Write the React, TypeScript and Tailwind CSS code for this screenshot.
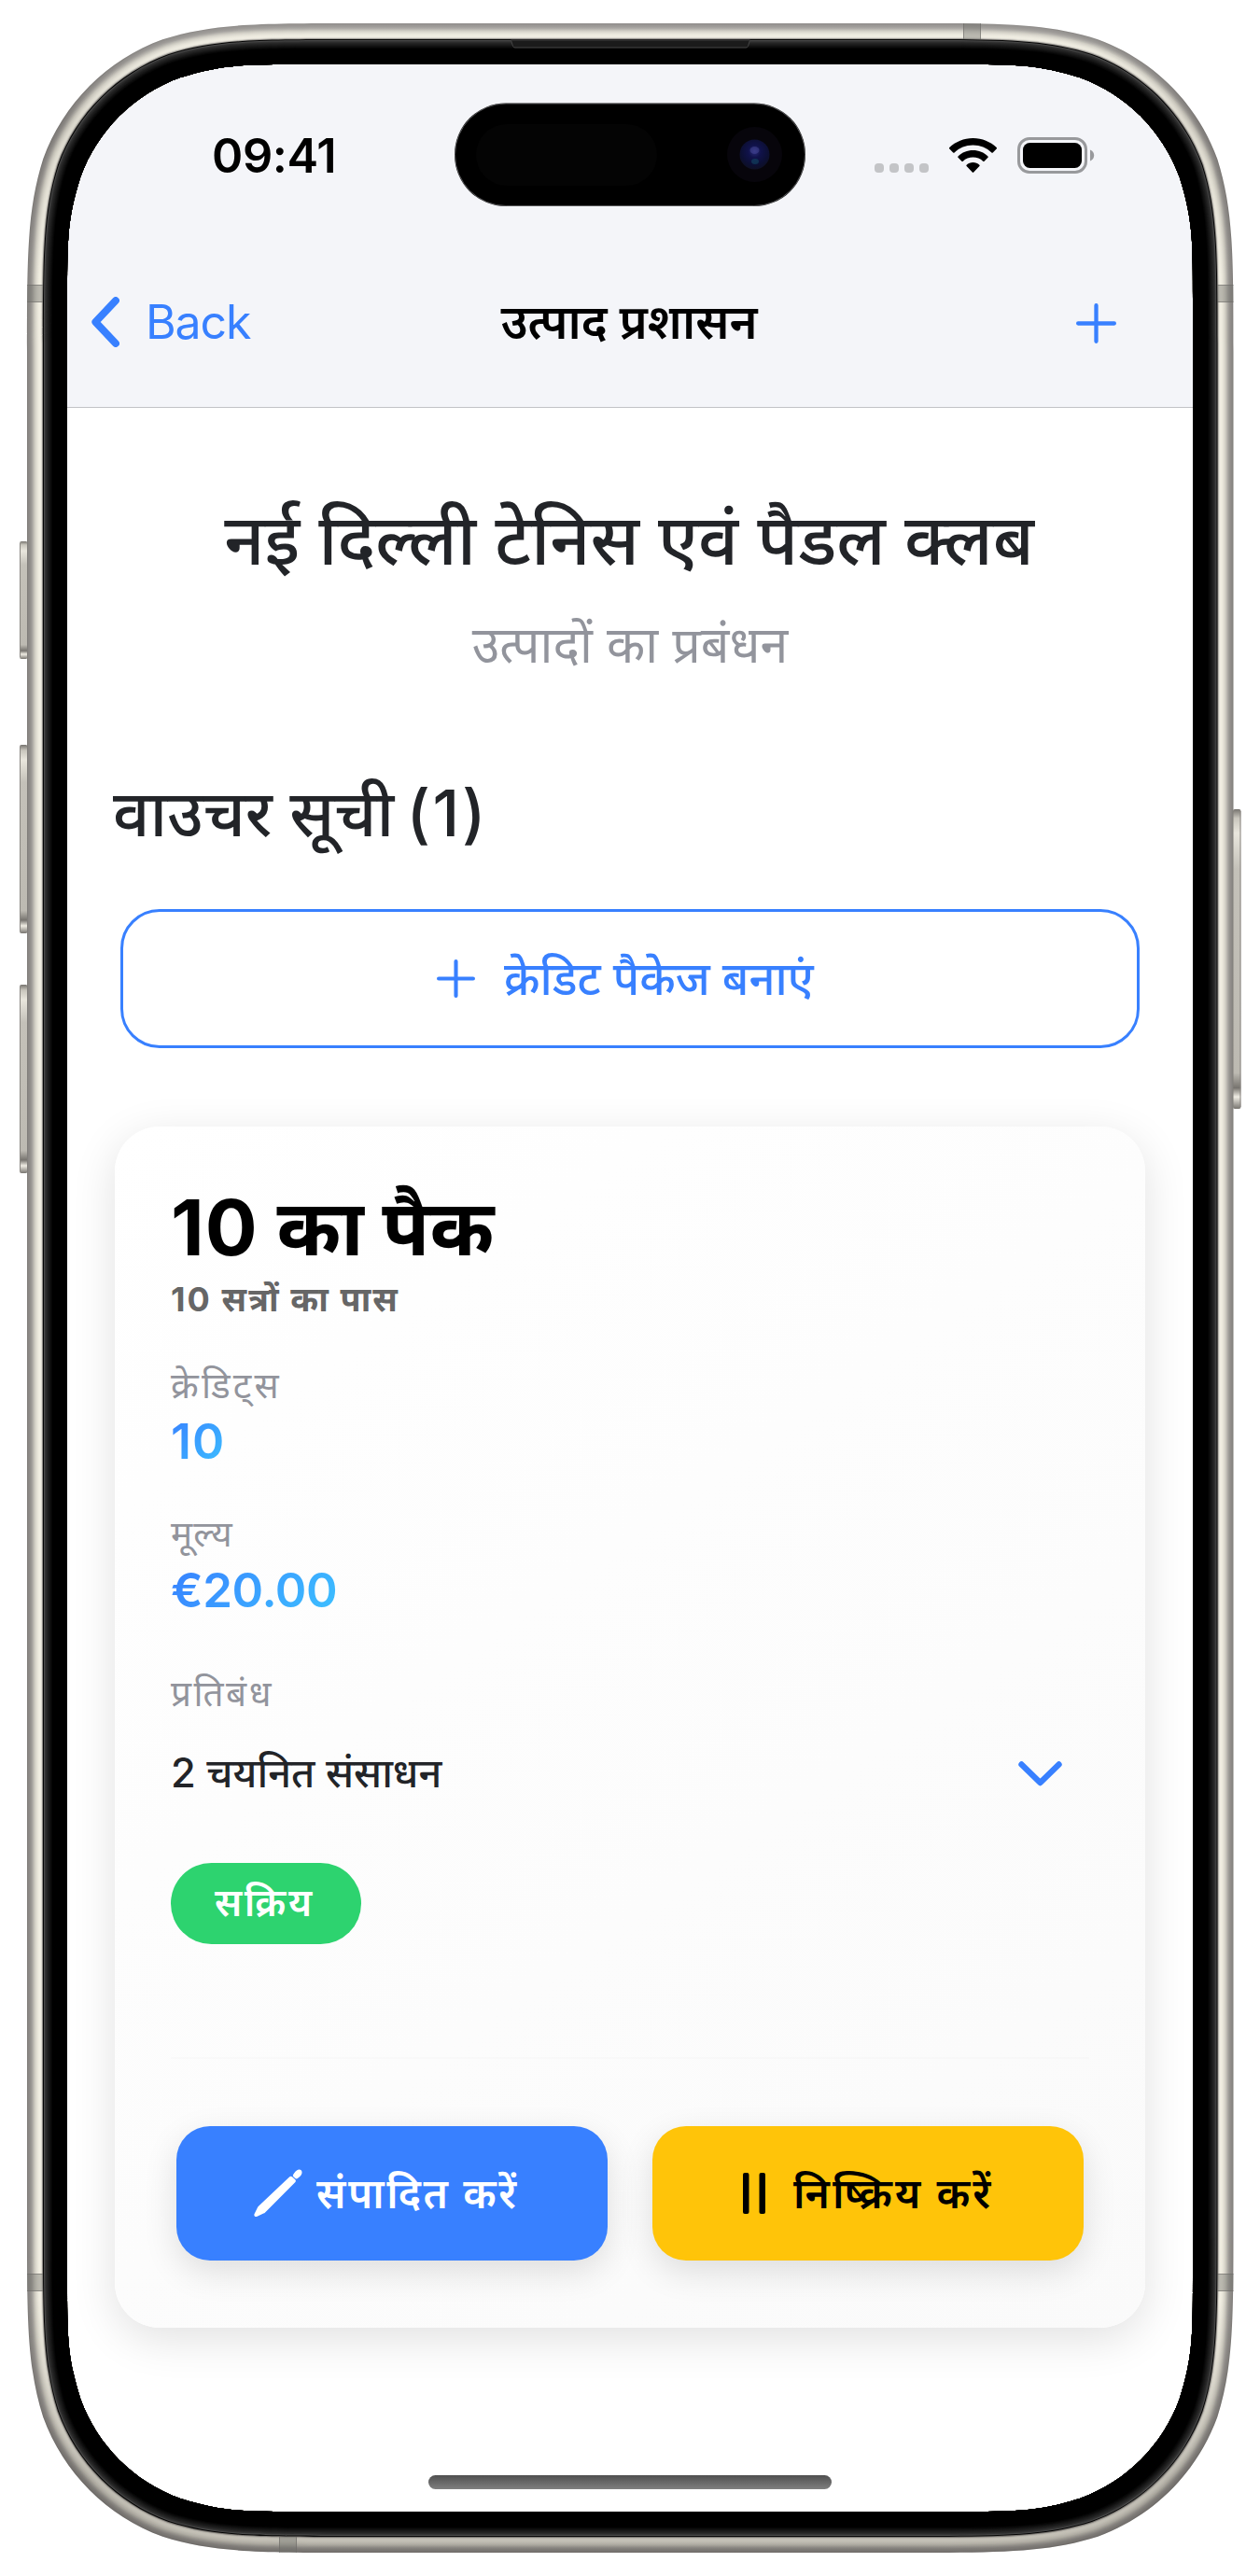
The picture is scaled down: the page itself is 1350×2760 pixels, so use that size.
import React from "react";

/** Rounded rectangle with continuous-curvature corners; `reach` is where the curve meets the straight edge. */
function squircle(x: number, y: number, w: number, h: number, r: number, reach = 1.52866): string {
  const a = reach * r, b = (reach * 0.5 + 0.324) * r, c = 0.86841 * r;
  const d = 0.63149 * r, e = 0.07491 * r, f = 0.37282 * r, g = 0.16906 * r;
  const X = x + w, Y = y + h;
  return [
    `M${x + a} ${y}H${X - a}`,
    `C${X - b} ${y} ${X - c} ${y} ${X - d} ${y + e}`,
    `C${X - f} ${y + g} ${X - g} ${y + f} ${X - e} ${y + d}`,
    `C${X} ${y + c} ${X} ${y + b} ${X} ${y + a}V${Y - a}`,
    `C${X} ${Y - b} ${X} ${Y - c} ${X - e} ${Y - d}`,
    `C${X - g} ${Y - f} ${X - f} ${Y - g} ${X - d} ${Y - e}`,
    `C${X - c} ${Y} ${X - b} ${Y} ${X - a} ${Y}H${x + a}`,
    `C${x + b} ${Y} ${x + c} ${Y} ${x + d} ${Y - e}`,
    `C${x + f} ${Y - g} ${x + g} ${Y - f} ${x + e} ${Y - d}`,
    `C${x} ${Y - c} ${x} ${Y - b} ${x} ${Y - a}V${y + a}`,
    `C${x} ${y + b} ${x} ${y + c} ${x + e} ${y + d}`,
    `C${x + g} ${y + f} ${x + f} ${y + g} ${x + d} ${y + e}`,
    `C${x + c} ${y} ${x + b} ${y} ${x + a} ${y}Z`,
  ].join("");
}

const SCREEN = squircle(72, 69, 1206, 2622, 191, 1.32);

const ring = (inset: number) =>
  squircle(29 + inset, 25 + inset, 1292.5 - inset * 2, 2710 - inset * 2, 230 - inset) + SCREEN;

const METAL = [
  "#817e7b", "#8a8784", "#8e8b88", "#93908c", "#9b9894", "#a6a39e", "#b4b1aa", "#c3c0b7",
  "#d0cdc3", "#dad7cc", "#e2dfd4", "#e9e6da", "#eeebdf", "#f1eee2", "#efece1", "#dcd9cf", "#8f8c87",
];
const GLASS = [
  "#050505", "#4a4a4a", "#343434", "#2b2b2b", "#242424", "#1e1e1e", "#181818", "#121212", "#0c0c0c", "#060606", "#000000",
];

const SIDE_KEYS: [number, number, number][] = [
  [21, 580, 126], [21, 798, 202], [21, 1055, 202], [1321, 867, 321],
];
const BANDS: [number, number, number, number][] = [
  [29, 305, 17, 19], [1304.5, 305, 17, 19], [29, 2436, 17, 19], [1304.5, 2436, 17, 19],
  [1032, 25, 19, 17], [299, 2718, 19, 17],
];

function PhoneFrame() {
  return (
    <svg className="pointer-events-none absolute inset-0" width="1350" height="2760" viewBox="0 0 1350 2760" fill="none">
      <defs>
        <linearGradient id="key" x1="0" y1="0" x2="0" y2="1">
          <stop offset="0" stopColor="#77746f" />
          <stop offset="0.03" stopColor="#c9c6bd" />
          <stop offset="0.08" stopColor="#e9e6dd" />
          <stop offset="0.2" stopColor="#c4c1b9" />
          <stop offset="0.88" stopColor="#bdbab2" />
          <stop offset="0.93" stopColor="#77746f" />
          <stop offset="0.96" stopColor="#f0ede4" />
          <stop offset="1" stopColor="#77746f" />
        </linearGradient>
        <linearGradient id="shade" x1="0" y1="25" x2="0" y2="2735" gradientUnits="userSpaceOnUse">
          <stop offset="0" stopColor="#fff" stopOpacity="0.12" />
          <stop offset="0.04" stopColor="#3a3632" stopOpacity="0.12" />
          <stop offset="0.1" stopColor="#3a3632" stopOpacity="0" />
          <stop offset="0.9" stopColor="#3a3632" stopOpacity="0" />
          <stop offset="0.97" stopColor="#3a3632" stopOpacity="0.28" />
          <stop offset="1" stopColor="#3a3632" stopOpacity="0.24" />
        </linearGradient>
        <radialGradient id="lens" cx="0.5" cy="0.4" r="0.6">
          <stop offset="0" stopColor="#2b2c78" />
          <stop offset="0.35" stopColor="#10124a" />
          <stop offset="0.75" stopColor="#0c0f33" />
          <stop offset="1" stopColor="#0e1024" />
        </radialGradient>
      </defs>
      {SIDE_KEYS.map(([x, y, h]) => (
        <g key={y}>
          <rect x={x} y={y} width="8.5" height={h} rx="2" fill="url(#key)" />
          <rect x={x < 100 ? x : x + 7.5} y={y + 2} width="1" height={h - 4} fill="#8b8883" />
        </g>
      ))}
      {METAL.map((c, i) => (
        <path key={i} d={ring(i)} fill={c} fillRule="evenodd" />
      ))}
      <path d={ring(0)} fill="url(#shade)" fillRule="evenodd" />
      {BANDS.map(([x, y, w, h]) => (
        <g key={`${x}-${y}`}>
          <rect x={x} y={y} width={w} height={h} fill="#6f6f6c" opacity="0.42" />
          {w < h ? (
            <path d={`M${x} ${y + 0.5}h${w}M${x} ${y + h - 0.5}h${w}`} stroke="#6d6b68" opacity="0.6" />
          ) : (
            <path d={`M${x + 0.5} ${y}v${h}M${x + w - 0.5} ${y}v${h}`} stroke="#6d6b68" opacity="0.6" />
          )}
        </g>
      ))}
      {GLASS.map((c, i) => (
        <path key={i} d={ring(17 + i)} fill={c} fillRule="evenodd" />
      ))}
      <path d="M547.5 43h256l-2 6.5q-.5 1.5-2.5 1.5H552q-2 0-2.5-1.5Z" fill="#1b1b1b" stroke="#454545" />
      <rect x="487" y="110.5" width="376" height="110.5" rx="55" fill="#000" />
      <rect x="487.5" y="111" width="375" height="109.5" rx="54.7" stroke="#a9a9ad" strokeOpacity="0.5" />
      <rect x="510" y="133" width="194" height="66" rx="33" fill="#040404" />
      <circle cx="808.5" cy="165.5" r="29.5" fill="#07050b" />
      <circle cx="808.5" cy="165.5" r="16" fill="url(#lens)" />
      <ellipse cx="808.5" cy="161" rx="5" ry="4" fill="#5356a8" opacity="0.4" />
      <ellipse cx="809" cy="173" rx="4" ry="3" fill="#12526a" opacity="0.5" />
    </svg>
  );
}

function StatusBar() {
  return (
    <div className="flex h-[195px] shrink-0 items-center">
      <span className="ml-[155px] w-[136px] text-[50.5px] leading-[60px] font-semibold tracking-[-0.4px] text-black">09:41</span>
      <div className="mr-[105px] ml-auto flex items-center">
        <div className="mt-[27px] flex gap-1.5">
          {[0, 1, 2, 3].map((i) => (
            <span key={i} className="h-2.5 w-2.5 rounded-[4px] bg-[#c3c4c7]" />
          ))}
        </div>
        <svg className="ml-[22px]" width="51" height="38" viewBox="0 0 51 38">
          <path d="M25.5 0C15.7 0 6.8 3.8.3 10.1a1 1 0 0 0 0 1.4l3.9 3.9a1 1 0 0 0 1.4 0C10.8 10.5 17.8 7.5 25.5 7.5s14.7 3 19.9 7.9a1 1 0 0 0 1.4 0l3.9-3.9a1 1 0 0 0 0-1.4C44.2 3.8 35.3 0 25.5 0Z" />
          <path d="M25.5 13.1c-6.2 0-11.8 2.4-16 6.3a1 1 0 0 0 0 1.4l3.9 3.9a1 1 0 0 0 1.4 0c2.8-2.6 6.6-4.1 10.7-4.1s7.9 1.5 10.7 4.1a1 1 0 0 0 1.4 0l3.9-3.9a1 1 0 0 0 0-1.4c-4.2-3.9-9.8-6.3-16-6.3Z" />
          <path d="M25.5 26c-2.7 0-5.1 1-6.9 2.7a1 1 0 0 0 0 1.4l6.2 6.5a1 1 0 0 0 1.4 0l6.2-6.5a1 1 0 0 0 0-1.4C30.6 27 28.2 26 25.5 26Z" />
        </svg>
        <svg className="ml-[22px]" width="83" height="39" viewBox="0 0 83 39" fill="none">
          <rect x="1.5" y="1.5" width="72" height="36" rx="11.5" stroke="#98999c" strokeWidth="3" />
          <rect x="6" y="6" width="63" height="27" rx="7.5" fill="#000" />
          <path d="M78 13.5c2.5.9 4.2 3.2 4.2 6s-1.700 5.100-4.200 6Z" fill="#98999c" />
        </svg>
      </div>
    </div>
  );
}

function PlusIcon({ size }: { size: number }) {
  return (
    <svg className="shrink-0" width={size} height={size} viewBox="0 0 42 42" fill="none" stroke="currentColor" strokeWidth="4.2" strokeLinecap="round">
      <path d="M21 2.1v37.8M2.1 21h37.8" />
    </svg>
  );
}

function NavBar() {
  return (
    <div className="grid h-[162px] shrink-0 grid-cols-[1fr_auto_1fr] items-center px-[26px]">
      <div className="flex items-center gap-[28px] text-[#3880ff]">
        <svg width="30" height="54" viewBox="0 0 30 54" fill="none" stroke="currentColor" strokeWidth="7.8" strokeLinecap="round" strokeLinejoin="round">
          <path d="M26 4 4.300 27l21.700 23" />
        </svg>
        <span className="text-[50px] leading-[60px] tracking-[-1.1px]">Back</span>
      </div>
      <h1 className="-translate-x-px text-[50.8px] leading-[60px] font-semibold text-black">उत्पाद प्रशासन</h1>
      <div className="flex justify-end pt-0.5 pr-[56px] text-[#3880ff]">
        <PlusIcon size={43} />
      </div>
    </div>
  );
}

const LABEL = "text-[38.7px] leading-[50px] text-[#92949c]";
const VALUE =
  "mt-1.5 w-fit bg-linear-[135deg,#3880ff,#3dc2ff] bg-clip-text leading-[60px] font-semibold text-transparent";
const ACTION = "flex h-[144px] w-[462px] items-center rounded-[36px] shadow-[0_12px_36px_rgba(0,0,0,0.12)]";
const ACTION_TEXT = "whitespace-nowrap leading-[60px] font-semibold";

function VoucherCard() {
  return (
    <section className="mx-[51px] mt-[84px] flex h-[1287px] flex-col items-stretch rounded-[48px] bg-linear-[145deg,#ffffff,#fafafa] px-[60px] pt-[58px] shadow-[0_12px_48px_rgba(0,0,0,0.12)]">
      <h3 className="text-[83px] leading-[100px] font-bold text-black">
        <span className="tracking-[1px]">10</span> का पैक
      </h3>
      <p className="mt-0.5 text-[36px] leading-[50px] font-bold tracking-[2.1px] text-[#666666]">10 सत्रों का पास</p>

      <p className={`mt-[42px] tracking-[3.2px] ${LABEL}`}>क्रेडिट्स</p>
      <p className={`${VALUE} text-[52px] tracking-[1px]`}>10</p>

      <p className={`mt-[43px] tracking-[1.2px] ${LABEL}`}>मूल्य</p>
      <p className={`${VALUE} text-[51px] tracking-[-0.4px]`}>€20.00</p>

      <p className={`mt-[55px] tracking-[2.5px] ${LABEL}`}>प्रतिबंध</p>
      <div className="mt-[30px] flex h-[60px] items-center justify-between pr-[29px]">
        <span className="text-[43.4px] leading-[60px] font-medium text-[#222428]">2 चयनित संसाधन</span>
        <svg className="mt-1" width="47" height="28" viewBox="0 0 47 28" fill="none" stroke="#3880ff" strokeWidth="6.4" strokeLinecap="round" strokeLinejoin="round">
          <path d="M3.5 3.5 23.5 23 43.5 3.5" />
        </svg>
      </div>

      <span className="mt-[67px] flex h-[87px] w-[204px] items-center rounded-full bg-[#2dd36f] pb-1 pl-[47px] text-[41px] leading-[60px] font-semibold tracking-[2.5px] text-white">
        सक्रिय
      </span>

      <hr className="mt-[121px] h-0.5 border-0 bg-black/[0.01]" />

      <div className="mt-[72px] flex justify-between px-1.5">
        <button className={`${ACTION} gap-[14px] bg-[#3880ff] pl-[83px] text-white`}>
          <svg className="shrink-0" width="53" height="52" viewBox="0 0 53 52" fill="currentColor">
            <path d="M42.1 6.1C43.5 3.700 45.600.9 48 .5c2.300-.3 3.900 1.500 3.500 3.800-.4 2.300-2.500 4.200-4.700 5.700-.8.600-1.700.5-2.400-.1l-1.900-1.700c-.6-.6-.8-1.300-.4-2.100Z" />
            <path d="M38.3 8.3c.8-.8 1.900-.8 2.700-.1l3.300 3c.8.700.8 1.900.1 2.700L12.100 46.400c-.5.500-1.100.9-1.800 1.200l-6.800 3.200c-2.100.9-3.800-.7-2.900-2.700l3.200-6.600c.3-.7.700-1.200 1.200-1.700L38.300 8.300Z" />
          </svg>
          <span className={`${ACTION_TEXT} text-[44px] tracking-[2.6px]`}>संपादित करें</span>
        </button>
        <button className={`${ACTION} gap-[30px] bg-[#ffc409] pl-[97px] text-black`}>
          <svg className="shrink-0" width="24" height="44" viewBox="0 0 24 44" fill="currentColor">
            <rect width="6.5" height="44" rx="2" />
            <rect x="17.5" width="6.5" height="44" rx="2" />
          </svg>
          <span className={`${ACTION_TEXT} text-[44.5px] tracking-[3px]`}>निष्क्रिय करें</span>
        </button>
      </div>
    </section>
  );
}

export default function App() {
  return (
    <div className="relative h-[2760px] w-[1350px] overflow-hidden bg-white pt-[69px] pl-[72px] font-['Inter','Noto_Sans',sans-serif]">
      <main className="flex h-[2622px] w-[1206px] flex-col overflow-hidden rounded-[150px] bg-white">
        <header className="h-[368px] shrink-0 border-b border-[#c1c3c6] bg-[#f4f5f9]">
          <StatusBar />
          <NavBar />
        </header>

        <h2 className="mt-24 -translate-x-px text-center text-[75.5px] leading-[90px] font-medium whitespace-nowrap text-[#222428]">
          नई दिल्ली टेनिस एवं पैडल क्लब
        </h2>
        <p className="mt-[38px] text-center text-[53.7px] leading-[60px] text-[#92949c]">उत्पादों का प्रबंधन</p>

        <h2 className="mt-[110px] ml-[49px] text-[69.2px] leading-[80px] font-medium text-[#222428]">
          वाउचर सूची <span className="ml-[-5px] tracking-[2.5px]">(1)</span>
        </h2>

        <button className="mt-[63px] ml-[57px] flex h-[149px] w-[1092px] shrink-0 items-center gap-[31px] rounded-[42px] border-[3px] border-[#3880ff] pl-[336px] text-[#3880ff]">
          <PlusIcon size={41} />
          <span className="text-[49px] leading-[60px] font-medium">क्रेडिट पैकेज बनाएं</span>
        </button>

        <VoucherCard />

        <div className="mt-[158px] h-[15px] w-[432px] self-center rounded-full bg-linear-to-b from-[#505050] to-[#808080]" />
      </main>
      <PhoneFrame />
    </div>
  );
}
